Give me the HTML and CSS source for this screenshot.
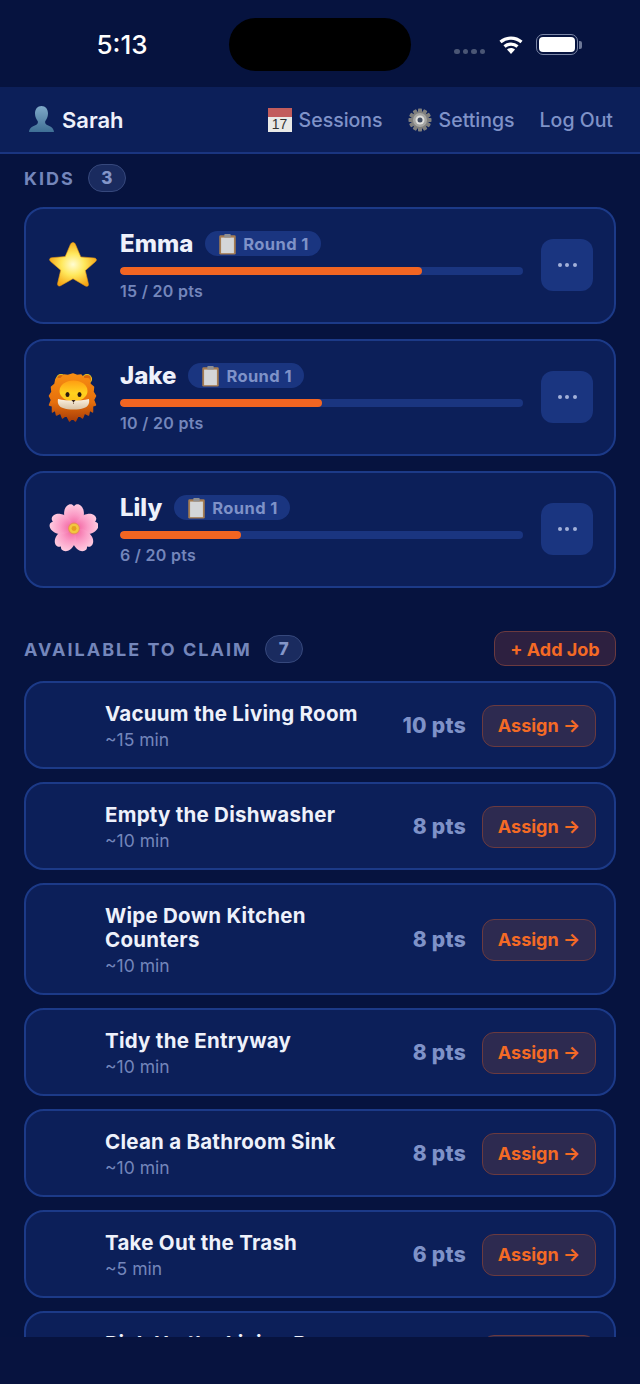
FILE: index.html
```html
<!DOCTYPE html>
<html lang="en">
<head>
    <meta charset="UTF-8">
    <meta name="viewport" content="width=device-width, initial-scale=1.0">
    <title>Chores | Dashboard</title>
    <link rel="stylesheet" href="styles.css">
</head>
<body>
    <!-- emoji drawings, reused below -->
    <svg class="sprite" aria-hidden="true">
        <defs>
            <radialGradient id="g-star" cx=".5" cy=".5" r=".55">
                <stop offset="0" stop-color="#fffcd2"/>
                <stop offset=".45" stop-color="#ffe85c"/>
                <stop offset="1" stop-color="#f4a010"/>
            </radialGradient>
            <linearGradient id="g-bust" x1="0" y1="0" x2="0" y2="1">
                <stop offset="0" stop-color="#7fa9c9"/>
                <stop offset="1" stop-color="#3f6f95"/>
            </linearGradient>
            <linearGradient id="g-face" x1="0" y1="0" x2="0" y2="1">
                <stop offset="0" stop-color="#ff9d12"/>
                <stop offset=".6" stop-color="#ffd21f"/>
                <stop offset="1" stop-color="#ffc21a"/>
            </linearGradient>
            <linearGradient id="g-mane" x1="0" y1="0" x2="0" y2="1">
                <stop offset="0" stop-color="#f78d12"/>
                <stop offset=".6" stop-color="#e66f0c"/>
                <stop offset="1" stop-color="#a83d08"/>
            </linearGradient>
            <linearGradient id="g-muzzle" x1="0" y1="0" x2="0" y2="1">
                <stop offset="0" stop-color="#fbf1e0"/>
                <stop offset="1" stop-color="#d8c2a4"/>
            </linearGradient>
            <radialGradient id="g-petal" cx=".5" cy=".95" r="1">
                <stop offset="0" stop-color="#f2609f"/>
                <stop offset=".5" stop-color="#fb9cc6"/>
                <stop offset="1" stop-color="#ffcfe2"/>
            </radialGradient>
            <symbol id="i-star" viewBox="0 0 50 50">
                <path d="M25 2.500c1.200 0 2 .8 2.600 2.200l5.200 12.200 13.200 1.100c2.600.2 3.200 2.100 1.300 3.800l-10 8.700 3 12.900c.6 2.500-1 3.700-3.200 2.400L25 38.700l-12.100 6.800c-2.200 1.300-3.800.1-3.200-2.400l3-12.900-10-8.700c-1.900-1.700-1.300-3.600 1.300-3.800l13.200-1.100 5.200-12.200C23 3.300 23.800 2.500 25 2.500z" fill="url(#g-star)" stroke="#eb9a12" stroke-width=".6"/>
            </symbol>
            <symbol id="i-lion" viewBox="0 0 50 50">
                <circle cx="13" cy="7" r="4.500" fill="#d9660c" stroke="#e8c020" stroke-width="1.200"/>
                <circle cx="39" cy="7" r="4.500" fill="#d9660c" stroke="#e8c020" stroke-width="1.200"/>
                <path d="M25 2l4 1.500 4-.5 3 3.500 5 .5 1 5 3.500 3-.5 5 2.500 4-2 4 2 5-3 1 0 6-3-2-1 5-4-2-2 5-4-3-3 6-3-3-3 3-3-6-4 3-2-5-4 2-1-5-3 2 0-6-3-1 2-5-2-4 2.500-4-.5-5 3.500-3 1-5 5-.5 3-3.500 4 .5z" fill="url(#g-mane)" stroke="url(#g-mane)" stroke-width="1.500" stroke-linejoin="round"/>
                <ellipse cx="25.500" cy="19" rx="14" ry="10.500" fill="url(#g-face)"/>
                <path d="M10 27c5 1.500 10 1.500 15.500 1.500S36 28.500 41 27c1 5-1.500 8-5 9-3 1-6.500 1.500-10.500 1.500S18 37 15 36c-3.500-1-6-4-5-9z" fill="url(#g-muzzle)"/>
                <ellipse cx="19.500" cy="22.500" rx="2" ry="2.500" fill="#2a1a10"/>
                <ellipse cx="31.500" cy="22.500" rx="2" ry="2.500" fill="#2a1a10"/>
                <path d="M23.500 28h4l-2 2.500z" fill="#3a2418"/>
                <path d="M25.500 30.500v1.500" stroke="#6a4a34" stroke-width=".7" fill="none"/>
            </symbol>
            <symbol id="i-flower" viewBox="0 0 50 50">
                <g transform="translate(26 24.500) scale(1.080)">
                    <path id="petal" d="M0 -1c-7-3-10-9-9-15 .5-4 3.500-7 6.500-6.500 1 .2 1.800.9 2.500 2 .7-1.100 1.500-1.800 2.500-2C5.500-23 8.500-20 9-16c1 6-2 12-9 15z" fill="url(#g-petal)"/>
                    <use href="#petal" transform="rotate(72)"/>
                    <use href="#petal" transform="rotate(144)"/>
                    <use href="#petal" transform="rotate(216)"/>
                    <use href="#petal" transform="rotate(288)"/>
                    <circle r="5" fill="#f2c83f" stroke="#e8905a"/>
                    <circle r="2.300" fill="#e6a020"/>
                </g>
            </symbol>
            <symbol id="i-bust" viewBox="0 0 26 28">
                <path d="M13 1c4 0 6.500 3 6.500 7.500 0 3.500-1.500 6-2.800 7.800-.5 2 .5 3.200 3 4.200 3 1.200 5.300 2.500 5.800 6.500H.5c.5-4 2.800-5.300 5.800-6.500 2.500-1 3.500-2.200 3-4.200C8 14.500 6.500 12 6.500 8.500 6.500 4 9 1 13 1z" fill="url(#g-bust)"/>
            </symbol>
            <symbol id="i-clip" viewBox="0 0 20 24">
                <rect x="1" y="2.500" width="18" height="21" rx="1.500" fill="#a57c52"/>
                <rect x="3" y="5" width="14" height="17" fill="#d4d6d8"/>
                <rect x="6.500" y="1" width="7" height="4" rx="1" fill="#8f8f92"/>
            </symbol>
            <symbol id="i-gear" viewBox="0 0 24 24">
                <g fill="#7f7f7d">
                    <circle cx="12" cy="12" r="8.800"/>
                    <rect id="tooth" x="10" y=".5" width="4" height="23" rx=".8"/>
                    <use href="#tooth" transform="rotate(30 12 12)"/>
                    <use href="#tooth" transform="rotate(60 12 12)"/>
                    <use href="#tooth" transform="rotate(90 12 12)"/>
                    <use href="#tooth" transform="rotate(120 12 12)"/>
                    <use href="#tooth" transform="rotate(150 12 12)"/>
                </g>
                <circle cx="12" cy="12" r="7" fill="#a6a6a3"/>
                <circle cx="12" cy="12" r="4.500" fill="#dededb"/>
                <circle cx="12" cy="12" r="2.500" fill="#3f4a5f"/>
            </symbol>
        </defs>
    </svg>

    <div class="status-bar">
        <div class="status-time">5:13</div>
        <div class="island"></div>
        <div class="status-icons">
            <div class="signal"><i></i><i></i><i></i><i></i></div>
            <svg class="wifi" viewBox="0 0 28 20">
                <path d="M14 19l-4-4.600c2.400-2 5.600-2 8 0z" fill="#fff"/>
                <path d="M7.500 11.500c3.800-3.300 9.200-3.300 13 0M3.500 7c6-5.300 15-5.300 21 0" stroke="#fff" stroke-width="3.200" fill="none"/>
            </svg>
            <div class="battery"><div class="battery-fill"></div></div>
            <div class="battery-cap"></div>
        </div>
    </div>

    <nav class="topnav">
        <div class="user">
            <svg class="emoji-bust"><use href="#i-bust"/></svg>
            <span>Sarah</span>
        </div>
        <div class="links">
            <a class="link">
                <span class="cal"><span class="cal-top"></span><span class="cal-day">17</span></span>
                Sessions
            </a>
            <a class="link">
                <svg class="emoji-gear"><use href="#i-gear"/></svg>
                Settings
            </a>
            <a class="link">Log Out</a>
        </div>
    </nav>

    <main class="content">
        <div class="section-head kids-head">
            <h2>KIDS</h2>
            <span class="count">3</span>
        </div>
        <div class="kids">
            <div class="kid">
                <svg class="kid-emoji"><use href="#i-star"/></svg>
                <div class="kid-info">
                    <div class="kid-top">
                        <span class="kid-name">Emma</span>
                        <span class="round"><svg class="emoji-clip"><use href="#i-clip"/></svg>Round 1</span>
                    </div>
                    <div class="track"><div class="fill" style="width: 75%"></div></div>
                    <div class="kid-pts">15 / 20 pts</div>
                </div>
                <button class="more"><i></i><i></i><i></i></button>
            </div>
            <div class="kid">
                <svg class="kid-emoji"><use href="#i-lion"/></svg>
                <div class="kid-info">
                    <div class="kid-top">
                        <span class="kid-name">Jake</span>
                        <span class="round"><svg class="emoji-clip"><use href="#i-clip"/></svg>Round 1</span>
                    </div>
                    <div class="track"><div class="fill" style="width: 50%"></div></div>
                    <div class="kid-pts">10 / 20 pts</div>
                </div>
                <button class="more"><i></i><i></i><i></i></button>
            </div>
            <div class="kid">
                <svg class="kid-emoji"><use href="#i-flower"/></svg>
                <div class="kid-info">
                    <div class="kid-top">
                        <span class="kid-name">Lily</span>
                        <span class="round"><svg class="emoji-clip"><use href="#i-clip"/></svg>Round 1</span>
                    </div>
                    <div class="track"><div class="fill" style="width: 30%"></div></div>
                    <div class="kid-pts">6 / 20 pts</div>
                </div>
                <button class="more"><i></i><i></i><i></i></button>
            </div>
        </div>

        <div class="section-head jobs-head">
            <h2>AVAILABLE TO CLAIM</h2>
            <span class="count">7</span>
            <button class="add-job">+ Add Job</button>
        </div>
        <div class="jobs">
            <div class="job">
                <div class="job-text"><div class="job-name">Vacuum the Living Room</div><div class="job-time">~15 min</div></div>
                <div class="job-pts">10 pts</div>
                <button class="assign">Assign →</button>
            </div>
            <div class="job">
                <div class="job-text"><div class="job-name">Empty the Dishwasher</div><div class="job-time">~10 min</div></div>
                <div class="job-pts">8 pts</div>
                <button class="assign">Assign →</button>
            </div>
            <div class="job">
                <div class="job-text"><div class="job-name">Wipe Down Kitchen Counters</div><div class="job-time">~10 min</div></div>
                <div class="job-pts">8 pts</div>
                <button class="assign">Assign →</button>
            </div>
            <div class="job">
                <div class="job-text"><div class="job-name">Tidy the Entryway</div><div class="job-time">~10 min</div></div>
                <div class="job-pts">8 pts</div>
                <button class="assign">Assign →</button>
            </div>
            <div class="job">
                <div class="job-text"><div class="job-name">Clean a Bathroom Sink</div><div class="job-time">~10 min</div></div>
                <div class="job-pts">8 pts</div>
                <button class="assign">Assign →</button>
            </div>
            <div class="job">
                <div class="job-text"><div class="job-name">Take Out the Trash</div><div class="job-time">~5 min</div></div>
                <div class="job-pts">6 pts</div>
                <button class="assign">Assign →</button>
            </div>
            <div class="job">
                <div class="job-text"><div class="job-name">Pick Up the Living Room</div><div class="job-time">~5 min</div></div>
                <div class="job-pts">5 pts</div>
                <button class="assign">Assign →</button>
            </div>
        </div>
    </main>
    <div class="home-gap"></div>
</body>
</html>
```

FILE: styles.css
```css
* {
    box-sizing: border-box;
}
html, body {
    height: 100%;
}
body {
    font-family: Inter, "Noto Sans", sans-serif;
    background-color: #06133f;
    color: #fff;
    margin: 0;
    padding: 0;
    height: 1384px;
    display: flex;
    flex-direction: column;
    overflow: hidden;
}
.sprite {
    display: block;
    width: 0;
    height: 0;
}

/* status bar */
.status-bar {
    height: 87px;
    flex: none;
    display: grid;
    grid-template-columns: 229px 182px 229px;
    padding-top: 18px;
}
.status-time {
    height: 53px;
    line-height: 54px;
    font-size: 26px;
    font-weight: 500;
    text-align: center;
    padding-left: 15px;
}
.island {
    height: 53px;
    background-color: #000;
    border-radius: 27px;
}
.status-icons {
    height: 53px;
    display: flex;
    align-items: center;
    padding-left: 43px;
}
.signal {
    display: flex;
    gap: 3px;
    margin-top: 14px;
    margin-right: 12px;
}
.signal i {
    width: 5.500px;
    height: 5.500px;
    border-radius: 50%;
    background-color: #4a5675;
}
.wifi {
    width: 28px;
    height: 20px;
    margin-right: 11px;
}
.battery {
    flex: none;
    width: 42px;
    height: 21px;
    border: 1.500px solid #7b86a6;
    border-radius: 7px;
    padding: 2px;
}
.battery-fill {
    width: 100%;
    height: 100%;
    background-color: #fff;
    border-radius: 4px;
}
.battery-cap {
    width: 3px;
    height: 8px;
    margin-left: 1px;
    background-color: #6d7898;
    border-radius: 0 2px 2px 0;
}

/* top nav */
.topnav {
    height: 67px;
    flex: none;
    background-color: #0c1f59;
    border-bottom: 2px solid #1a3580;
    display: flex;
    align-items: center;
    justify-content: space-between;
    padding: 1px 27px 0 28px;
}
.user {
    display: flex;
    align-items: center;
    gap: 7px;
    font-size: 22px;
    font-weight: 600;
    color: #eef1fb;
}
.emoji-bust {
    width: 27px;
    height: 28px;
    margin-top: -2px;
}
.links {
    display: flex;
    align-items: center;
    gap: 25px;
}
.link {
    display: flex;
    align-items: center;
    gap: 7px;
    font-size: 19.500px;
    font-weight: 500;
    color: #7f92c8;
}
.cal {
    width: 24px;
    height: 24px;
    display: flex;
    flex-direction: column;
    background-color: #e9e9e6;
}
.cal-top {
    height: 9px;
    background-color: #c25c5c;
}
.cal-day {
    flex: 1;
    font-family: "Liberation Sans", sans-serif;
    font-size: 14px;
    line-height: 15px;
    text-align: center;
    color: #333;
}
.emoji-gear {
    width: 24px;
    height: 24px;
}

/* main scroll area */
.content {
    flex: 1;
    overflow: hidden;
    padding: 10px 24px 0;
}
.section-head {
    display: flex;
    align-items: center;
    gap: 13px;
    margin-bottom: 15px;
}
.section-head h2 {
    margin: 1px 0 0;
    font-size: 18px;
    font-weight: 700;
    letter-spacing: 2px;
    color: #7486bb;
}
.kids-head {
    height: 28px;
}
.jobs-head {
    height: 35px;
    margin-top: 44px;
}
.count {
    height: 28px;
    min-width: 38px;
    line-height: 26px;
    text-align: center;
    font-size: 17px;
    font-weight: 800;
    color: #8496c9;
    background-color: #1a2b5f;
    border: 1.500px solid #36487c;
    border-radius: 14px;
}
.add-job {
    margin-left: auto;
    width: 122px;
    height: 35px;
    padding: 1px 0 0;
    font-family: inherit;
    font-size: 18px;
    font-weight: 700;
    color: #f46a25;
    background-color: #2d2040;
    border: 1.500px solid #6b3a3f;
    border-radius: 11px;
}

/* kid cards */
.kids {
    display: flex;
    flex-direction: column;
    gap: 16px;
}
.kid {
    height: 117px;
    margin-bottom: -1px;
    display: flex;
    align-items: center;
    padding: 0 21px 1px 22px;
    background-color: #0c1f59;
    border: 2px solid #1c3a88;
    border-radius: 20px;
}
.kid-emoji {
    width: 50px;
    height: 50px;
    flex: none;
}
.kid-info {
    flex: 1;
    margin-left: 22px;
}
.kid-top {
    height: 27px;
    display: flex;
    align-items: center;
    gap: 12px;
    margin-bottom: 10px;
}
.kid-name {
    font-size: 24px;
    font-weight: 800;
    color: #eef1fb;
}
.round {
    height: 25px;
    display: flex;
    align-items: center;
    gap: 6px;
    padding: 0 12px 0 13px;
    font-size: 16.500px;
    font-weight: 700;
    letter-spacing: .4px;
    color: #7f92c8;
    background-color: #1a3580;
    border-radius: 13px;
}
.emoji-clip {
    width: 19px;
    height: 22px;
}
.track {
    height: 8px;
    background-color: #1a3580;
    border-radius: 4px;
    overflow: hidden;
}
.fill {
    height: 100%;
    background-color: #f26522;
    border-radius: 4px;
}
.kid-pts {
    margin-top: 7px;
    font-size: 16px;
    line-height: 18px;
    font-weight: 600;
    letter-spacing: .3px;
    color: #7486bb;
}
.more {
    width: 52px;
    height: 52px;
    flex: none;
    margin-left: 18px;
    padding: 0;
    display: flex;
    align-items: center;
    justify-content: center;
    gap: 3.500px;
    background-color: #1a3580;
    border: none;
    border-radius: 12px;
}
.more i {
    width: 4px;
    height: 4px;
    border-radius: 50%;
    background-color: #a3b1d9;
}

/* job rows */
.jobs {
    display: flex;
    flex-direction: column;
    gap: 13px;
}
.job {
    flex: none;
    display: flex;
    align-items: center;
    padding: 18px 18px 18px 79px;
    background-color: #0c1f59;
    border: 2px solid #1c3a88;
    border-radius: 20px;
}
.job-text {
    flex: 1;
    min-width: 0;
}
.job-name {
    max-width: 275px;
    padding-top: 1px;
    font-size: 20.500px;
    line-height: 24px;
    font-weight: 700;
    letter-spacing: .25px;
    color: #eef1fb;
}
.job-time {
    margin-top: 4px;
    font-size: 17.500px;
    line-height: 19px;
    color: #7486bb;
}
.job-pts {
    flex: none;
    margin: 1px 16px 0 0;
    font-size: 21px;
    font-weight: 800;
    letter-spacing: .3px;
    color: #7f92c8;
}
.assign {
    width: 114px;
    height: 42px;
    flex: none;
    margin-top: 1px;
    padding: 0;
    font-family: inherit;
    font-size: 18px;
    font-weight: 700;
    color: #f46a25;
    background-color: #2d2a50;
    border: 1.500px solid #6b3a3f;
    border-radius: 12px;
}
.home-gap {
    height: 47px;
    flex: none;
    background-color: #07133f;
}
```
